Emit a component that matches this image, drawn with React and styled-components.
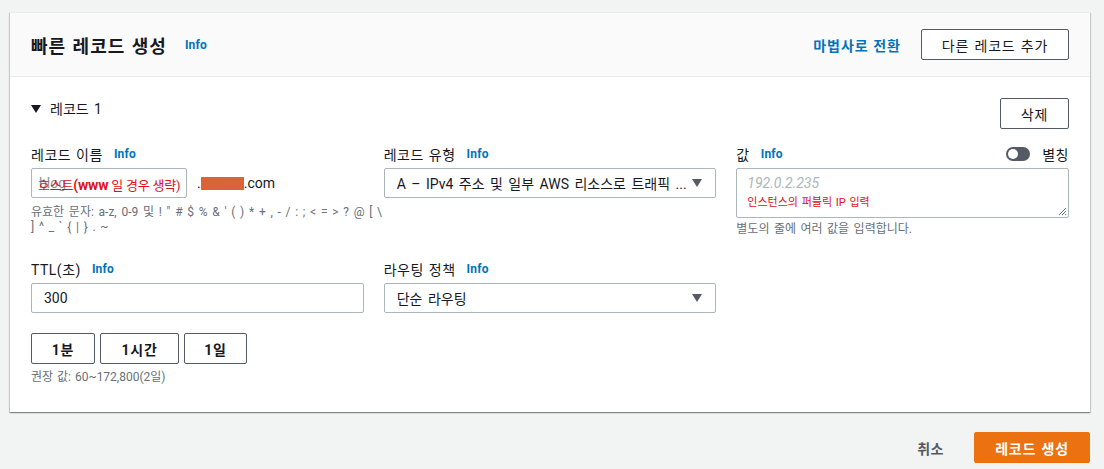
import React from "react";
import styled, { createGlobalStyle } from "styled-components";

const Global = createGlobalStyle`
  html, body { margin: 0; padding: 0; background: #f2f3f3; }
  body {
    font-family: Roboto, "Noto Sans CJK KR", "Liberation Sans", sans-serif;
    font-size: 14px;
    color: #16191f;
  }
  * { box-sizing: border-box; }
`;

const Page = styled.div`
  width: 1104px;
  height: 469px;
  padding: 12px 14px 0 10px;
  overflow: hidden;
`;

const Card = styled.div`
  background: #fff;
  box-shadow: 0 1px 1px 0 rgba(0, 28, 36, 0.3), 1px 1px 1px 0 rgba(0, 28, 36, 0.15), -1px 1px 1px 0 rgba(0, 28, 36, 0.15);
  border-top: 1px solid #eaeded;
`;

const Header = styled.div`
  height: 64px;
  background: #fafafa;
  border-bottom: 1px solid #eaeded;
  display: flex;
  align-items: center;
  padding: 0 21px 0 21px;
`;

const Title = styled.h2`
  margin: 0;
  font-size: 18px;
  font-weight: 700;
  letter-spacing: 1px;
  word-spacing: 1px;
`;

const Info = styled.span`
  color: #0073bb;
  font-size: 12px;
  font-weight: 700;
  letter-spacing: 0.2px;
  margin-left: ${(p) => p.$gap || 11}px;
`;

const Spacer = styled.div`
  flex: 1;
`;

const Link = styled.span`
  color: #0073bb;
  font-weight: 700;
  font-size: 14px;
  letter-spacing: 1px;
  margin-right: 20px;
`;

const Button = styled.button`
  font-family: inherit;
  font-size: 14px;
  font-weight: ${(p) => (p.$bold ? 700 : 400)};
  color: #16191f;
  background: #fff;
  border: 1px solid #545b64;
  border-radius: 2px;
  height: 31px;
  width: ${(p) => p.$w}px;
  padding: 0;
  display: inline-flex;
  align-items: center;
  justify-content: center;
  letter-spacing: 0.8px;
  word-spacing: 1px;
`;

const Body = styled.div`
  padding: 21px 21px 27px 21px;
`;

const SectionHead = styled.div`
  display: flex;
  align-items: flex-start;
  justify-content: space-between;
  margin-bottom: 13px;
`;

const Toggle = styled.div`
  display: flex;
  align-items: center;
  gap: 9px;
  line-height: 22px;
  font-size: 14px;
  word-spacing: 2px;
`;

const Caret = styled.span`
  display: inline-block;
  flex: none;
  width: 0;
  height: 0;
  border-left: 5px solid transparent;
  border-right: 5px solid transparent;
  border-top: 8px solid ${(p) => p.$color || "#16191f"};
`;

const Grid = styled.div`
  display: grid;
  grid-template-columns: repeat(3, minmax(0, 1fr));
  column-gap: 20px;
  row-gap: 20px;
  width: 1038px;
`;

const Field = styled.div`
  display: flex;
  flex-direction: column;
`;

const LabelRow = styled.div`
  display: flex;
  align-items: center;
  height: 22px;
  padding-top: 2px;
  margin-bottom: 4px;
`;

const Label = styled.span`
  font-size: 14px;
  letter-spacing: 0.5px;
  word-spacing: 1px;
`;

const TextInput = styled.div`
  height: 30px;
  border: 1px solid #aab7b8;
  border-radius: 2px;
  padding: 0 13px 0 12px;
  display: flex;
  align-items: center;
  width: ${(p) => (p.$w ? `${p.$w}px` : "100%")};
  position: relative;
  background: #fff;
  font-size: 14px;
`;

const SelectText = styled.span`
  flex: 1;
  white-space: nowrap;
  overflow: hidden;
  word-spacing: 2px;
`;

const Hint = styled.div`
  font-size: 12px;
  line-height: 15px;
  color: #687078;
  word-spacing: ${(p) => p.$ws || 1}px;
  width: ${(p) => (p.$w ? `${p.$w}px` : "auto")};
  margin-top: ${(p) => p.$mt || 6}px;
`;

const HostRow = styled.div`
  display: flex;
  align-items: center;
`;

const Ghost = styled.span`
  color: #879596;
  font-size: 14px;
  margin-left: -5px;
`;

const Overlay = styled.span`
  position: absolute;
  left: 6px;
  top: 6px;
  color: #e0101a;
  font-size: 13px;
  white-space: nowrap;
  letter-spacing: -0.2px;
  b {
    font-weight: 700;
    font-size: 14px;
  }
`;

const Domain = styled.span`
  margin-left: 10px;
  display: inline-flex;
  align-items: center;
  font-size: 14px;
`;

const Redacted = styled.span`
  display: inline-block;
  width: 43px;
  height: 13px;
  background: #d9643a;
`;

const Switch = styled.span`
  margin-left: auto;
  display: inline-flex;
  align-items: center;
  gap: 12px;
`;

const Track = styled.span`
  width: 24px;
  height: 14px;
  border-radius: 7px;
  background: #545b64;
  position: relative;
  &::after {
    content: "";
    position: absolute;
    left: 2px;
    top: 2px;
    width: 10px;
    height: 10px;
    border-radius: 50%;
    background: #fff;
  }
`;

const TextArea = styled.div`
  height: 50px;
  border: 1px solid #aab7b8;
  border-radius: 2px;
  padding: 5px 10px;
  position: relative;
`;

const Placeholder = styled.div`
  color: #aab7b8;
  font-style: italic;
  font-size: 14px;
  line-height: 18px;
`;

const Note = styled.div`
  color: #e0101a;
  font-size: 11px;
  line-height: 14px;
  margin-top: 4px;
  word-spacing: 1px;
`;

const Resize = styled.svg`
  position: absolute;
  right: 1px;
  bottom: 1px;
`;

const Presets = styled.div`
  display: flex;
  gap: 5px;
  margin-top: 20px;
`;

const Footer = styled.div`
  display: flex;
  justify-content: flex-end;
  align-items: center;
  margin-top: 20px;
`;

const Cancel = styled.span`
  font-weight: 700;
  color: #545b64;
  font-size: 14px;
  letter-spacing: 0.5px;
  margin-right: 30px;
`;

const Primary = styled.button`
  font-family: inherit;
  width: 116px;
  height: 31px;
  border: 1px solid #ec7211;
  background: #ec7211;
  color: #fff;
  font-weight: 700;
  font-size: 14px;
  border-radius: 2px;
  letter-spacing: 0.8px;
  word-spacing: 1px;
`;

const validChars = "유효한 문자: a-z, 0-9 및 ! \" # $ % & ' ( ) * + , - / : ; < = > ? @ [ \\ ] ^ _ ` { | } . ~";

export default function App() {
  return (
    <>
      <Global />
      <Page>
        <Card>
          <Header>
            <Title>빠른 레코드 생성</Title>
            <Info $gap={18}>Info</Info>
            <Spacer />
            <Link>마법사로 전환</Link>
            <Button $w={148}>다른 레코드 추가</Button>
          </Header>
          <Body>
            <SectionHead>
              <Toggle>
                <Caret />
                레코드 1
              </Toggle>
              <Button $w={69}>삭제</Button>
            </SectionHead>
            <Grid>
              <Field>
                <LabelRow>
                  <Label>레코드 이름</Label>
                  <Info>Info</Info>
                </LabelRow>
                <HostRow>
                  <TextInput $w={156}>
                    <Ghost>blog</Ghost>
                    <Overlay>
                      호스트<b>(www</b> 일 경우 생략)
                    </Overlay>
                  </TextInput>
                  <Domain>
                    .<Redacted />.com
                  </Domain>
                </HostRow>
                <Hint $mt={7} $w={352} $ws={1.75}>{validChars}</Hint>
              </Field>
              <Field>
                <LabelRow>
                  <Label>레코드 유형</Label>
                  <Info>Info</Info>
                </LabelRow>
                <TextInput>
                  <SelectText>A – IPv4 주소 및 일부 AWS 리소스로 트래픽 ...</SelectText>
                  <Caret $color="#545b64" />
                </TextInput>
              </Field>
              <Field>
                <LabelRow>
                  <Label>값</Label>
                  <Info>Info</Info>
                  <Switch>
                    <Track />
                    <Label>별칭</Label>
                  </Switch>
                </LabelRow>
                <TextArea>
                  <Placeholder>192.0.2.235</Placeholder>
                  <Note>인스턴스의 퍼블릭 IP 입력</Note>
                  <Resize width="10" height="10" viewBox="0 0 10 10">
                    <path d="M9 2 L2 9 M9 5 L5 9 M9 8 L8 9" stroke="#687078" strokeWidth="1" />
                  </Resize>
                </TextArea>
                <Hint $mt={4} $ws={1.5}>별도의 줄에 여러 값을 입력합니다.</Hint>
              </Field>
              <Field>
                <LabelRow>
                  <Label>TTL(초)</Label>
                  <Info>Info</Info>
                </LabelRow>
                <TextInput>300</TextInput>
                <Presets>
                  <Button $w={64} $bold>1분</Button>
                  <Button $w={79} $bold>1시간</Button>
                  <Button $w={63} $bold>1일</Button>
                </Presets>
                <Hint $mt={6}>권장 값: 60~172,800(2일)</Hint>
              </Field>
              <Field>
                <LabelRow>
                  <Label>라우팅 정책</Label>
                  <Info>Info</Info>
                </LabelRow>
                <TextInput>
                  <SelectText>단순 라우팅</SelectText>
                  <Caret $color="#545b64" />
                </TextInput>
              </Field>
            </Grid>
          </Body>
        </Card>
        <Footer>
          <Cancel>취소</Cancel>
          <Primary>레코드 생성</Primary>
        </Footer>
      </Page>
    </>
  );
}
